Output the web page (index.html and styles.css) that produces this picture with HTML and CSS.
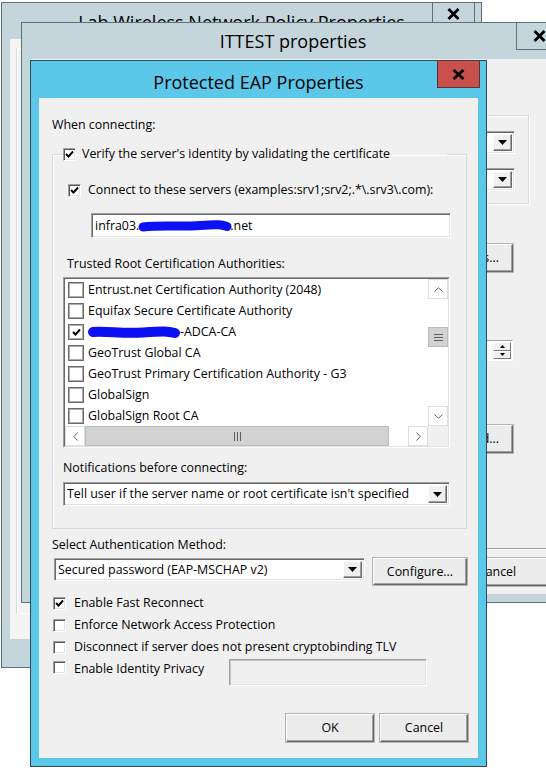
FILE: index.html
```html
<!DOCTYPE html>
<html lang="en">
<head>
<meta charset="utf-8">
<title>Protected EAP Properties</title>
<link rel="stylesheet" href="styles.css">
</head>
<body>
<div class="desktop">

  <section class="win win-lab">
    <header class="titlebar">
      <span class="title">Lab Wireless Network Policy Properties</span>
      <span class="close"><svg viewBox="0 0 13 12" width="13" height="12"><path d="M1.5 1 L11.5 11 M11.5 1 L1.5 11" stroke="#000" stroke-width="2.8" fill="none"/></svg></span>
    </header>
    <div class="client"><div class="tabpanel"></div></div>
  </section>

  <section class="win win-ittest">
    <header class="titlebar">
      <span class="title">ITTEST properties</span>
      <span class="close"><svg viewBox="0 0 13 12" width="13" height="12"><path d="M1.5 1 L11.5 11 M11.5 1 L1.5 11" stroke="#000" stroke-width="2.8" fill="none"/></svg></span>
    </header>
    <div class="client">
      <div class="w2-pane">
        <div class="w2-group">
          <div class="combo w2-combo"><span class="combo-text"></span><span class="drop"><svg viewBox="0 0 9 5" width="9" height="5"><path d="M0 0 H9 L4.5 5 Z" fill="#000"/></svg></span></div>
          <div class="combo w2-combo second"><span class="combo-text"></span><span class="drop"><svg viewBox="0 0 9 5" width="9" height="5"><path d="M0 0 H9 L4.5 5 Z" fill="#000"/></svg></span></div>
        </div>
        <button class="btn w2-btn first">Edit Servers...</button>
        <div class="spin-field">
          <span class="spin"><span class="spin-up"><svg viewBox="0 0 5 3" width="5" height="3"><path d="M0 3 L2.5 0 L5 3 Z" fill="#000"/></svg></span><span class="spin-down"><svg viewBox="0 0 5 3" width="5" height="3"><path d="M0 0 H5 L2.5 3 Z" fill="#000"/></svg></span></span>
        </div>
        <button class="btn w2-btn second">Advanced...</button>
        <div class="w2-sep"></div>
        <button class="btn w2-cancel">Cancel</button>
      </div>
    </div>
  </section>

  <section class="win win-peap active">
    <header class="titlebar">
      <span class="title">Protected EAP Properties</span>
      <span class="close red"><svg viewBox="0 0 13 11" width="13" height="11"><path d="M1.5 1 L11.5 10 M11.5 1 L1.5 10" stroke="#000" stroke-width="2.8" fill="none"/></svg></span>
    </header>
    <div class="client peap">
      <div class="label when">When connecting:</div>

      <fieldset class="group">
        <legend class="legend">
          <span class="cb checked"><svg viewBox="0 0 9 8" width="9" height="8"><path d="M1 4 L3.5 6.5 L8 1.5" stroke="#000" stroke-width="1.9" fill="none"/></svg></span>
          <span>Verify the server's identity by validating the certificate</span>
        </legend>

        <div class="check-row connect">
          <span class="cb checked"><svg viewBox="0 0 9 8" width="9" height="8"><path d="M1 4 L3.5 6.5 L8 1.5" stroke="#000" stroke-width="1.9" fill="none"/></svg></span>
          <span>Connect to these servers (examples:srv1;srv2;.*\.srv3\.com):</span>
        </div>

        <div class="textbox servers">
          <span>infra03.</span><svg class="redact srv" viewBox="0 0 94 14" width="94" height="14"><path d="M5 8 C22 6, 42 8, 62 6.5 S84 6, 89 7.5" stroke="#0b10f5" stroke-width="9" stroke-linecap="round" fill="none"/></svg><span>.net</span>
        </div>

        <div class="label trusted">Trusted Root Certification Authorities:</div>

        <div class="listbox">
          <div class="listbox-inner">
            <div class="list-area">
              <ul class="items">
                <li><span class="lcb"></span>Entrust.net Certification Authority (2048)</li>
                <li><span class="lcb"></span>Equifax Secure Certificate Authority</li>
                <li><span class="lcb"><svg viewBox="0 0 9 8" width="9" height="8"><path d="M1 4 L3.5 6.5 L8 1.5" stroke="#000" stroke-width="1.9" fill="none"/></svg></span><svg class="redact" viewBox="0 0 92 14" width="92" height="14"><path d="M5 7 C20 6, 35 9, 55 7.5 S80 6, 87 8" stroke="#0b10f5" stroke-width="10" stroke-linecap="round" fill="none"/></svg>-ADCA-CA</li>
                <li><span class="lcb"></span>GeoTrust Global CA</li>
                <li><span class="lcb"></span>GeoTrust Primary Certification Authority - G3</li>
                <li><span class="lcb"></span>GlobalSign</li>
                <li><span class="lcb"></span>GlobalSign Root CA</li>
              </ul>
              <div class="vscroll">
                <span class="sb-btn"><svg viewBox="0 0 9 5" width="9" height="5"><path d="M0.5 4.5 L4.5 0.8 L8.5 4.5" stroke="#606060" stroke-width="1" fill="none"/></svg></span>
                <span class="sb-track v">
                  <span class="sb-thumb v"><svg viewBox="0 0 9 7" width="9" height="7"><path d="M0 0.5 H9 M0 3.5 H9 M0 6.5 H9" stroke="#606060" stroke-width="1"/></svg></span>
                </span>
                <span class="sb-btn"><svg viewBox="0 0 9 5" width="9" height="5"><path d="M0.5 0.5 L4.5 4.2 L8.5 0.5" stroke="#606060" stroke-width="1" fill="none"/></svg></span>
              </div>
            </div>
            <div class="hscroll">
              <span class="sb-btn h"><svg viewBox="0 0 5 9" width="5" height="9"><path d="M4.5 0.5 L0.8 4.5 L4.5 8.5" stroke="#606060" stroke-width="1" fill="none"/></svg></span>
              <span class="sb-thumb h"><svg viewBox="0 0 7 9" width="7" height="9"><path d="M0.5 0 V9 M3.5 0 V9 M6.5 0 V9" stroke="#606060" stroke-width="1"/></svg></span>
              <span class="sb-track h"></span>
              <span class="sb-btn h"><svg viewBox="0 0 5 9" width="5" height="9"><path d="M0.5 0.5 L4.2 4.5 L0.5 8.5" stroke="#606060" stroke-width="1" fill="none"/></svg></span>
              <span class="sb-corner"></span>
            </div>
          </div>
        </div>

        <div class="label notif">Notifications before connecting:</div>
        <div class="combo notif-combo">
          <span class="combo-text">Tell user if the server name or root certificate isn't specified</span>
          <span class="drop"><svg viewBox="0 0 9 5" width="9" height="5"><path d="M0 0 H9 L4.5 5 Z" fill="#000"/></svg></span>
        </div>
      </fieldset>

      <div class="label method">Select Authentication Method:</div>
      <div class="method-row">
        <div class="combo auth-combo">
          <span class="combo-text">Secured password (EAP-MSCHAP v2)</span>
          <span class="drop"><svg viewBox="0 0 9 5" width="9" height="5"><path d="M0 0 H9 L4.5 5 Z" fill="#000"/></svg></span>
        </div>
        <button class="btn configure">Configure...</button>
      </div>

      <div class="options">
        <div class="check-row opt">
          <span class="cb checked"><svg viewBox="0 0 9 8" width="9" height="8"><path d="M1 4 L3.5 6.5 L8 1.5" stroke="#000" stroke-width="1.9" fill="none"/></svg></span>
          <span>Enable Fast Reconnect</span>
        </div>
        <div class="check-row opt">
          <span class="cb"></span>
          <span>Enforce Network Access Protection</span>
        </div>
        <div class="check-row opt">
          <span class="cb"></span>
          <span>Disconnect if server does not present cryptobinding TLV</span>
        </div>
        <div class="check-row opt identity">
          <span class="cb"></span>
          <span class="identity-label">Enable Identity Privacy</span>
          <span class="textbox disabled"></span>
        </div>
      </div>

      <div class="dialog-buttons">
        <button class="btn action">OK</button>
        <button class="btn action">Cancel</button>
      </div>
    </div>
  </section>

</div>
</body>
</html>
```

FILE: styles.css
```css
html, body {
  margin: 0;
  padding: 0;
  background: #ffffff;
  overflow: hidden;
}

body {
  font-family: "Open Sans", "Noto Sans", "DejaVu Sans", sans-serif;
  font-size: 12.4px;
  line-height: 16px;
  color: #000;
}

.desktop {
  position: relative;
  width: 546px;
  height: 770px;
  overflow: hidden;
}

/* ---------- generic button (defined first so that specific rules win) ---------- */
.btn {
  box-sizing: border-box;
  font: inherit;
  color: #000;
  background: #ececec;
  border: 1px solid;
  border-color: #fff #696969 #696969 #fff;
  box-shadow: inset -1px -1px 0 #a0a0a0, 0 0 0 1px #b4b4b4;
  padding: 0;
  margin: 0;
}

/* ---------- windows ---------- */
.win {
  position: absolute;
  box-sizing: border-box;
  border: 1px solid #5f6f77;
  background: #c4d5dc;
  display: flex;
  flex-direction: column;
}

.titlebar {
  position: relative;
  flex: none;
  display: flex;
  justify-content: center;
  align-items: center;
}

.title {
  font-size: 18px;
  line-height: 22px;
  color: #000;
  white-space: nowrap;
}

.close {
  position: absolute;
  top: -1px;
  box-sizing: border-box;
  display: flex;
  align-items: center;
  justify-content: center;
  border: 1px solid #5f6f77;
  background: #c4d5dc;
}

.client {
  background: #f0f0f0;
  flex: 1;
  box-sizing: border-box;
}

/* window 1 */
.win-lab {
  left: 1px;
  top: 2px;
  width: 481px;
  height: 666px;
}
.win-lab .titlebar { height: 36px; }
.win-lab .title { padding-top: 2px; }
.win-lab .close {
  left: 430px;
  width: 43px;
  height: 28px;
  padding-bottom: 4px;
}
.win-lab .client {
  margin: 0 8px 28px 8px;
  padding: 9px 0 0 7px;
  background: #f4f4f4;
}
.tabpanel {
  height: 564px;
  border-left: 1px solid #ffffff;
  border-top: 1px solid #ffffff;
  border-bottom: 1px solid #ffffff;
  box-shadow: -1px 0 0 #d8dde0;
}

/* window 2 */
.win-ittest {
  left: 21px;
  top: 22px;
  width: 620px;
  height: 581px;
}
.win-ittest .titlebar { height: 36px; padding-right: 76px; }
.win-ittest .close {
  left: 494px;
  width: 46px;
  height: 28px;
}
.win-ittest .client {
  margin: 0 8px 8px 8px;
}

.w2-pane {
  padding-left: 300px;
  padding-top: 56px;
  display: flex;
  flex-direction: column;
  align-items: flex-start;
}
.w2-group {
  box-sizing: border-box;
  width: 199px;
  height: 89px;
  border: 1px solid #d4dbe0;
  box-shadow: inset 1px 1px 0 #fff, 1px 1px 0 #fff;
  padding-top: 15px;
  padding-left: 20px;
}
.w2-combo {
  width: 164px;
  height: 23px;
}
.w2-combo.second { margin-top: 14px; }
.btn.w2-btn {
  width: 183px;
  height: 28px;
  text-align: right;
  padding-right: 13px;
}
.btn.w2-btn.first { margin-top: 40px; }
.btn.w2-btn.second { margin-top: 64px; }
.spin-field {
  margin-top: 68px;
  width: 183px;
  height: 21px;
  box-sizing: border-box;
  background: #fff;
  border: 1px solid;
  border-color: #a0a0a0 #fff #fff #a0a0a0;
  display: flex;
  justify-content: flex-end;
  padding: 1px 1px 1px 0;
}
.spin {
  width: 18px;
  display: flex;
  flex-direction: column;
}
.spin-up, .spin-down {
  flex: 1;
  display: flex;
  align-items: center;
  justify-content: center;
  background: #f0f0f0;
  border: 1px solid;
  border-color: #fff #7a7a7a #7a7a7a #fff;
}
.w2-sep {
  margin-top: 95px;
  width: 300px;
  height: 1px;
  background: #a0a0a0;
  border-bottom: 1px solid #fff;
}
.btn.w2-cancel {
  margin-top: 8px;
  margin-left: 114px;
  width: 106px;
  height: 28px;
}

/* window 3 (active) */
.win-peap {
  left: 30px;
  top: 60px;
  width: 457px;
  height: 707px;
  background: #5bc8ea;
  border-color: #2f4a58;
}
.win-peap .titlebar { height: 37px; }
.win-peap .title { padding-top: 4px; }
.close.red {
  right: 6px;
  width: 43px;
  height: 28px;
  background: #c9504b;
  border-color: #4a3a3a;
}
.win-peap .client {
  margin: 0 8px 8px 8px;
  padding: 19px 11px 0 13px;
}

/* ---------- controls ---------- */
.label { white-space: nowrap; }

.cb {
  flex: none;
  box-sizing: border-box;
  width: 13px;
  height: 13px;
  background: #fff;
  border: 1px solid;
  border-color: #a0a0a0 #fff #fff #a0a0a0;
  box-shadow: inset 1px 1px 0 #5a5a5a, inset -1px -1px 0 #e3e3e3;
  display: inline-flex;
  align-items: center;
  justify-content: center;
}

.check-row {
  display: flex;
  align-items: center;
  height: 16px;
  white-space: nowrap;
}

.group {
  margin: 13px 0 0 0;
  padding: 20px 15px 22px 10px;
  border: 1px solid #d4dbe0;
  box-shadow: inset 1px 1px 0 #fff;
  min-width: 0;
}
.legend {
  display: flex;
  align-items: center;
  gap: 6px;
  width: 384px;
  height: 16px;
  padding: 0;
  margin-left: 0;
  white-space: nowrap;
}

.connect {
  margin-left: 5px;
  gap: 7px;
}

.textbox {
  box-sizing: border-box;
  background: #fff;
  border: 1px solid;
  border-color: #a0a0a0 #fff #fff #a0a0a0;
  box-shadow: inset 1px 1px 0 #696969, inset -1px -1px 0 #e3e3e3;
}
.servers {
  margin: 15px 0 0 28px;
  width: 360px;
  height: 25px;
  display: flex;
  align-items: center;
  padding-left: 3px;
  white-space: nowrap;
}
.redact { flex: none; display: block; }
.redact.srv { margin: 0 -2px 0 -1px; }

.trusted {
  margin: 18px 0 0 4px;
}

.listbox {
  margin-top: 5px;
  box-sizing: border-box;
  width: 387px;
  height: 171px;
  border: 1px solid;
  border-color: #a0a0a0 #fff #fff #a0a0a0;
}
.listbox-inner {
  box-sizing: border-box;
  height: 100%;
  border: 1px solid;
  border-color: #696969 #e3e3e3 #e3e3e3 #696969;
  background: #fff;
  display: flex;
  flex-direction: column;
}
.list-area {
  display: flex;
  height: 147px;
}
.items {
  list-style: none;
  margin: 0;
  padding: 0;
  flex: 1;
}
.items li {
  height: 21px;
  display: flex;
  align-items: center;
  padding-left: 3px;
  white-space: nowrap;
}
.lcb {
  flex: none;
  box-sizing: border-box;
  width: 16px;
  height: 16px;
  margin-right: 4px;
  border: 1px solid #6a6a6a;
  box-shadow: inset 0 0 0 1px #adadad;
  background: #fff;
  display: inline-flex;
  align-items: center;
  justify-content: center;
}

.vscroll {
  width: 20px;
  display: flex;
  flex-direction: column;
}
.sb-btn {
  box-sizing: border-box;
  flex: none;
  width: 20px;
  height: 20px;
  display: flex;
  align-items: center;
  justify-content: center;
  background: #fff;
  border: 1px solid #dedede;
}
.sb-track.v {
  flex: 1;
  padding-top: 28px;
  background: #fff;
}
.sb-thumb.v {
  box-sizing: border-box;
  width: 20px;
  height: 20px;
  display: flex;
  align-items: center;
  justify-content: center;
  background: #d2d2d2;
  border: 1px solid #bcbcbc;
}
.hscroll {
  display: flex;
  height: 20px;
}
.sb-thumb.h {
  box-sizing: border-box;
  width: 304px;
  height: 20px;
  display: flex;
  align-items: center;
  justify-content: center;
  background: #d2d2d2;
  border: 1px solid #bcbcbc;
}
.sb-track.h {
  flex: 1;
  background: #fff;
}
.sb-corner {
  width: 20px;
  background: #f0f0f0;
}

.notif {
  margin-top: 12px;
}

.combo {
  box-sizing: border-box;
  display: flex;
  align-items: center;
  background: #fff;
  border: 1px solid;
  border-color: #a0a0a0 #fff #fff #a0a0a0;
  box-shadow: inset 1px 1px 0 #696969, inset -1px -1px 0 #e3e3e3;
  padding: 2px 2px 2px 3px;
}
.combo-text {
  flex: 1;
  white-space: nowrap;
  overflow: hidden;
}
.drop {
  flex: none;
  box-sizing: border-box;
  width: 19px;
  height: 100%;
  display: flex;
  align-items: center;
  justify-content: center;
  background: #f0f0f0;
  border: 1px solid;
  border-color: #fff #6a6a6a #6a6a6a #fff;
  box-shadow: inset -1px -1px 0 #a0a0a0;
}
.notif-combo {
  margin-top: 6px;
  width: 387px;
  height: 24px;
}

.method {
  margin-top: 8px;
}
.method-row {
  margin-top: 5px;
  display: flex;
  align-items: flex-start;
}
.auth-combo {
  margin-left: 2px;
  width: 311px;
  height: 23px;
}

.btn.configure {
  margin-left: 8px;
  width: 94px;
  height: 27px;
}

.options {
  margin-top: 10px;
  display: flex;
  flex-direction: column;
  gap: 6px;
}
.opt {
  margin-left: 1px;
  gap: 8px;
}
.identity {
  align-items: flex-start;
  height: 27px;
  margin-top: -2px;
}
.identity .cb, .identity .identity-label { margin-top: 2px; }
.textbox.disabled {
  margin-left: 17px;
  width: 198px;
  height: 27px;
  background: #f0f0f0;
  border-color: #a0a0a0 #fff #fff #a0a0a0;
  box-shadow: inset 1px 1px 0 #c8c8c8, inset -1px -1px 0 #e3e3e3;
}

.dialog-buttons {
  margin-top: 28px;
  display: flex;
  justify-content: flex-end;
  gap: 6px;
  margin-right: -1px;
}
.btn.action {
  width: 88px;
  height: 28px;
}
```
